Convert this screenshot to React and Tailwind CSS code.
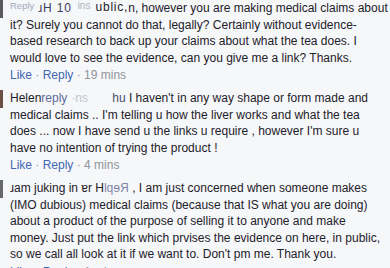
import React from 'react';

const comments = [
  {
    avatar: 'bg-[#5a5a5e]',
    first: (
      <div className="flex w-[377px] items-start whitespace-nowrap">
        <span className="relative -top-[2px] shrink-0 pr-[1px] text-[9.5px] text-[#a3a8b8]">Reply</span>
        <span className="shrink-0 pl-[3px] pr-[6px] tracking-[0.8px] text-[#3b3f5c]">ɹH 10</span>
        <span className="relative -top-[2px] shrink-0 pr-[5px] text-[10px] text-[#b0b4c0]">ins</span>
        <span className="relative -top-[1px] shrink-0 tracking-[0.8px] text-[#1d2129]">ublic,</span>
        <span className="ml-auto">n, however you are making medical claims about</span>
      </div>
    ),
    lines: [
      'it? Surely you cannot do that, legally? Certainly without evidence-',
      'based research to back up your claims about what the tea does. I',
      'would love to see the evidence, can you give me a link? Thanks.',
    ],
    time: '19 mins',
  },
  {
    avatar: 'bg-[#6b5048]',
    first: (
      <div className="flex w-[358px] whitespace-nowrap">
        <span>Helen</span>
        <span className="text-[#5d6b9a]">reply</span>
        <span className="ml-[4px] text-[#c4c8d2]">·ns</span>
        <span className="ml-auto">
          <span className="text-[#4a4e6a]">hu</span> I haven't in any way shape or form made and
        </span>
      </div>
    ),
    lines: [
      'medical claims .. I\'m telling u how the liver works and what the tea',
      'does ... now I have send u the links u require , however I\'m sure u',
      'have no intention of trying the product !',
    ],
    time: '4 mins',
  },
  {
    avatar: 'bg-[#68686c]',
    first: (
      <div className="flex w-[357px] whitespace-nowrap">
        <span>ɹam juking in ɐr H</span>
        <span className="-scale-x-100 text-[#7e86a8]">Repl</span>
        <span className="ml-auto">, I am just concerned when someone makes</span>
      </div>
    ),
    lines: [
      '(IMO dubious) medical claims (because that IS what you are doing)',
      'about a product of the purpose of selling it to anyone and make',
      'money. Just put the link which prvises the evidence on here, in public,',
      'so we call all look at it if we want to. Don\'t pm me. Thank you.',
    ],
    time: '1 min',
  },
];

const Comment = ({ c }) => (
  <div className="flex h-[90px]">
    <div className={`w-[3px] h-[18px] shrink-0 ${c.avatar}`} />
    <div className="ml-[7px] flex flex-col leading-[16.5px] text-[#1d2129]">
      {c.first}
      {c.lines.map((l, i) => (
        <div key={i} className="whitespace-nowrap">{l}</div>
      ))}
      <div className="mt-[1px] whitespace-nowrap leading-[16px]">
        <span className="text-[#4267b2]">Like</span>
        <span className="text-[#90949c]"> · </span>
        <span className="text-[#4267b2]">Reply</span>
        <span className="text-[#90949c]"> · {c.time}</span>
      </div>
    </div>
  </div>
);

export default function App() {
  return (
    <div className="w-[390px] h-[268px] overflow-hidden bg-[#f6f7f9] text-[12px] font-['Liberation_Sans',Arial,sans-serif]">
      {comments.map((c, i) => (
        <Comment key={i} c={c} />
      ))}
    </div>
  );
}
